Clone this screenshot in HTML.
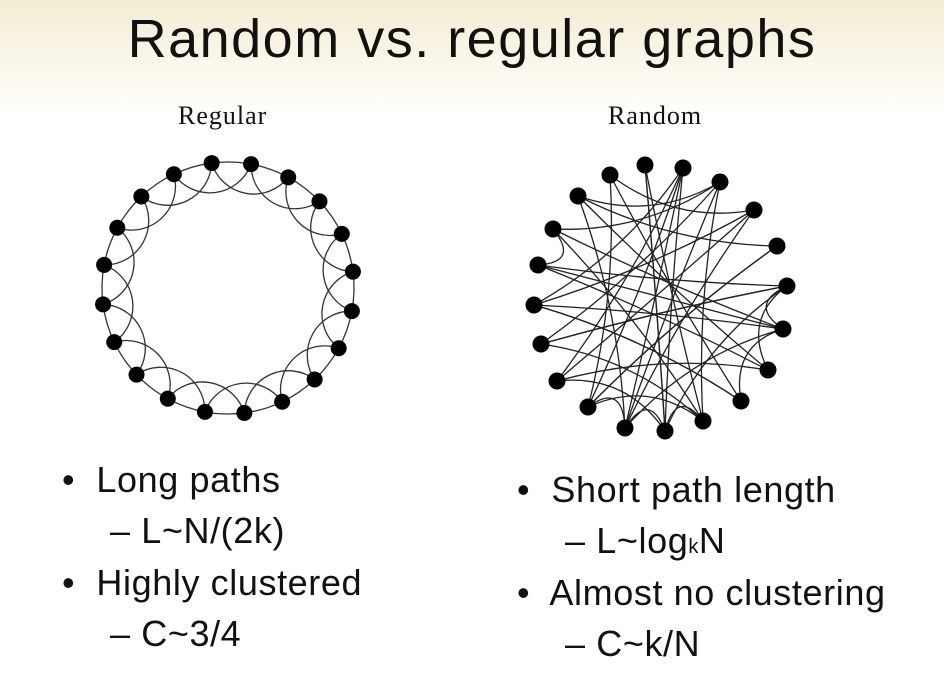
<!DOCTYPE html>
<html><head><meta charset="utf-8"><style>
body{margin:0;width:944px;height:678px;overflow:hidden;background:#fff;font-family:"Liberation Sans",sans-serif;position:relative}
.bg{position:absolute;left:0;top:0;width:944px;height:120px;background:linear-gradient(#f3edd3,#fbf8ee 60%,#fff)}
h1{position:absolute;left:0;width:944px;top:8px;margin:0;text-align:center;font-weight:normal;font-size:54px;letter-spacing:1.5px;color:#111}
.lbl{position:absolute;font-family:"Liberation Serif",serif;font-size:26px;letter-spacing:1px;color:#111}
.t{position:absolute;font-size:36px;letter-spacing:0.6px;color:#111;white-space:nowrap}
svg{position:absolute;left:0;top:0}
</style></head><body>
<div class="bg"></div>
<h1>Random vs. regular graphs</h1>
<div class="lbl" style="left:178px;top:101px">Regular</div>
<div class="lbl" style="left:608px;top:101px">Random</div>
<svg id="s" width="944" height="678"></svg>
<div class="t" style="left:62px;top:459px">•&nbsp; Long paths</div>
<div class="t" style="left:110px;top:510px">– L~N/(2k)</div>
<div class="t" style="left:62px;top:562px">•&nbsp; Highly clustered</div>
<div class="t" style="left:110px;top:613px">– C~3/4</div>
<div class="t" style="left:517px;top:469px">•&nbsp; Short path length</div>
<div class="t" style="left:565px;top:520px">– L~log<span style="font-size:20px">k</span>N</div>
<div class="t" style="left:517px;top:572px">•&nbsp; Almost no clustering</div>
<div class="t" style="left:565px;top:623px">– C~k/N</div>
<script>
var s=document.getElementById('s'),h='';
function ring(cx,cy,r,n,off){var p=[];for(var i=0;i<n;i++){var a=off+i*2*Math.PI/n;p.push([cx+r*Math.cos(a),cy+r*Math.sin(a)]);}return p;}
var A=ring(228,288,126,20,-Math.PI/2-0.13);
for(var i=0;i<20;i++){var a=A[i],b=A[(i+1)%20],c=A[(i+2)%20];
h+='<path d="M'+a+' A126 126 0 0 1 '+b+'" fill="none" stroke="#333" stroke-width="1.3"/>';
h+='<path d="M'+a+' A44 44 0 0 0 '+c+'" fill="none" stroke="#333" stroke-width="1.3"/>';}
var B=[[645,165],[683,168],[720,182],[754,210],[777,246],[787,286],[783,329],[768,370],[741,401],[703,421],[665,431],[625,428],[588,407],[557,381],[541,344],[534,305],[538,265],[553,229],[578,196],[610,175]];
var E=[[1,12],[1,13],[1,11],[1,15],[0,10],[19,8],[19,3],[18,4],[18,2],[17,6],[17,2],[16,5],[16,7],[15,3],[15,6],[15,8],[14,2],[14,5],[13,3],[13,10],[12,9],[12,4],[11,6],[11,2],[10,0],[10,5],[9,17],[9,14],[8,15],[7,13],[7,18],[6,16],[5,14],[4,12],[3,11],[2,9],[1,10],[0,9],[19,12],[18,11],[10,11],[9,10],[12,11],[16,17],[5,6],[7,5],[8,6]];
E.forEach(function(e){var a=B[e[0]],b=B[e[1]],mx=(a[0]+b[0])/2,my=(a[1]+b[1])/2,cx=mx+(660-mx)*0.3,cy=my+(298-my)*0.3;
h+='<path d="M'+a+' Q'+cx+','+cy+' '+b+'" fill="none" stroke="#222" stroke-width="1.3"/>';});
A.forEach(function(p){h+='<circle cx="'+p[0]+'" cy="'+p[1]+'" r="8" fill="#000"/>';});
B.forEach(function(p){h+='<circle cx="'+p[0]+'" cy="'+p[1]+'" r="8.5" fill="#000"/>';});
s.innerHTML=h;
</script>
</body></html>
